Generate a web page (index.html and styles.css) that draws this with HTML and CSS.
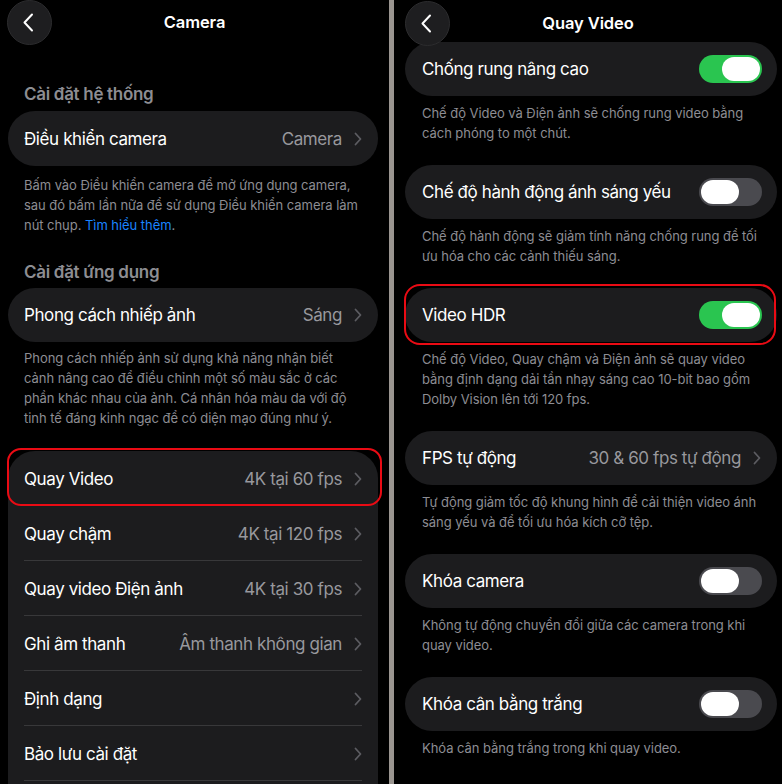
FILE: index.html
```html
<!DOCTYPE html>
<html lang="vi">
<head>
<meta charset="utf-8">
<title>Camera</title>
<link rel="stylesheet" href="styles.css">
</head>
<body>
<div class="screen">
  <section class="panel panel-left">
    <header class="nav">
      <div class="back"><svg width="12" height="19" viewBox="0 0 12 19"><path d="M10 1.5L2.5 9.5L10 17.5" fill="none" stroke="#fff" stroke-width="2" stroke-linecap="round" stroke-linejoin="round"/></svg></div>
      <div class="nav-title">Camera</div>
    </header>
    <div class="content content-left">
      <div class="sec-head">Cài đặt hệ thống</div>
      <div class="card">
        <div class="row"><span class="label">Điều khiển camera</span><span class="value">Camera</span><svg class="chev" width="8" height="14" viewBox="0 0 8 14"><path d="M1.5 1.5L6.5 7L1.5 12.5" fill="none" stroke="#5c5c61" stroke-width="1.8" stroke-linecap="round" stroke-linejoin="round"/></svg></div>
      </div>
      <p class="foot foot-1">Bấm vào Điều khiển camera để mở ứng dụng camera, sau đó bấm lần nữa để sử dụng Điều khiển camera làm nút chụp. <span class="link">Tìm hiểu thêm</span>.</p>
      <div class="sec-head sec-head-2">Cài đặt ứng dụng</div>
      <div class="card">
        <div class="row row-54"><span class="label">Phong cách nhiếp ảnh</span><span class="value">Sáng</span><svg class="chev" width="8" height="14" viewBox="0 0 8 14"><path d="M1.5 1.5L6.5 7L1.5 12.5" fill="none" stroke="#5c5c61" stroke-width="1.8" stroke-linecap="round" stroke-linejoin="round"/></svg></div>
      </div>
      <p class="foot foot-2">Phong cách nhiếp ảnh sử dụng khả năng nhận biết cảnh nâng cao để điều chỉnh một số màu sắc ở các phần khác nhau của ảnh. Cá nhân hóa màu da với độ tinh tế đáng kinh ngạc để có diện mạo đúng như ý.</p>
      <div class="card group">
        <div class="highlight hl-left"></div>
        <div class="row sep"><span class="label">Quay Video</span><span class="value">4K tại 60 fps</span><svg class="chev" width="8" height="14" viewBox="0 0 8 14"><path d="M1.5 1.5L6.5 7L1.5 12.5" fill="none" stroke="#5c5c61" stroke-width="1.8" stroke-linecap="round" stroke-linejoin="round"/></svg></div>
        <div class="row sep"><span class="label">Quay chậm</span><span class="value">4K tại 120 fps</span><svg class="chev" width="8" height="14" viewBox="0 0 8 14"><path d="M1.5 1.5L6.5 7L1.5 12.5" fill="none" stroke="#5c5c61" stroke-width="1.8" stroke-linecap="round" stroke-linejoin="round"/></svg></div>
        <div class="row sep"><span class="label">Quay video Điện ảnh</span><span class="value">4K tại 30 fps</span><svg class="chev" width="8" height="14" viewBox="0 0 8 14"><path d="M1.5 1.5L6.5 7L1.5 12.5" fill="none" stroke="#5c5c61" stroke-width="1.8" stroke-linecap="round" stroke-linejoin="round"/></svg></div>
        <div class="row sep"><span class="label">Ghi âm thanh</span><span class="value">Âm thanh không gian</span><svg class="chev" width="8" height="14" viewBox="0 0 8 14"><path d="M1.5 1.5L6.5 7L1.5 12.5" fill="none" stroke="#5c5c61" stroke-width="1.8" stroke-linecap="round" stroke-linejoin="round"/></svg></div>
        <div class="row sep"><span class="label">Định dạng</span><span class="value"></span><svg class="chev" width="8" height="14" viewBox="0 0 8 14"><path d="M1.5 1.5L6.5 7L1.5 12.5" fill="none" stroke="#5c5c61" stroke-width="1.8" stroke-linecap="round" stroke-linejoin="round"/></svg></div>
        <div class="row sep"><span class="label">Bảo lưu cài đặt</span><span class="value"></span><svg class="chev" width="8" height="14" viewBox="0 0 8 14"><path d="M1.5 1.5L6.5 7L1.5 12.5" fill="none" stroke="#5c5c61" stroke-width="1.8" stroke-linecap="round" stroke-linejoin="round"/></svg></div>
        <div class="row-spacer"></div>
      </div>
    </div>
  </section>

  <div class="divider"></div>

  <section class="panel panel-right">
    <header class="nav nav-right">
      <div class="back"><svg width="12" height="19" viewBox="0 0 12 19"><path d="M10 1.5L2.5 9.5L10 17.5" fill="none" stroke="#fff" stroke-width="2" stroke-linecap="round" stroke-linejoin="round"/></svg></div>
      <div class="nav-title">Quay Video</div>
    </header>
    <div class="content content-right">
      <div class="card">
        <div class="row row-r"><span class="label">Chống rung nâng cao</span><span class="toggle on"><span class="knob"></span></span></div>
      </div>
      <p class="foot foot-r">Chế độ Video và Điện ảnh sẽ chống rung video bằng cách phóng to một chút.</p>
      <div class="card">
        <div class="row row-r"><span class="label">Chế độ hành động ánh sáng yếu</span><span class="toggle"><span class="knob"></span></span></div>
      </div>
      <p class="foot foot-r">Chế độ hành động sẽ giảm tính năng chống rung để tối ưu hóa cho các cảnh thiếu sáng.</p>
      <div class="card">
        <div class="highlight hl-right"></div>
        <div class="row row-r"><span class="label">Video HDR</span><span class="toggle on"><span class="knob"></span></span></div>
      </div>
      <p class="foot foot-r">Chế độ Video, Quay chậm và Điện ảnh sẽ quay video bằng định dạng dải tần nhạy sáng cao 10-bit bao gồm Dolby Vision lên tới 120 fps.</p>
      <div class="card">
        <div class="row row-r"><span class="label">FPS tự động</span><span class="value">30 &amp; 60 fps tự động</span><svg class="chev" width="8" height="14" viewBox="0 0 8 14"><path d="M1.5 1.5L6.5 7L1.5 12.5" fill="none" stroke="#5c5c61" stroke-width="1.8" stroke-linecap="round" stroke-linejoin="round"/></svg></div>
      </div>
      <p class="foot foot-r">Tự động giảm tốc độ khung hình để cải thiện video ánh sáng yếu và để tối ưu hóa kích cỡ tệp.</p>
      <div class="card">
        <div class="row row-r"><span class="label">Khóa camera</span><span class="toggle"><span class="knob"></span></span></div>
      </div>
      <p class="foot foot-r">Không tự động chuyển đổi giữa các camera trong khi quay video.</p>
      <div class="card">
        <div class="row row-r"><span class="label">Khóa cân bằng trắng</span><span class="toggle"><span class="knob"></span></span></div>
      </div>
      <p class="foot foot-r">Khóa cân bằng trắng trong khi quay video.</p>
    </div>
  </section>
</div>
</body>
</html>
```

FILE: styles.css
```css
* { box-sizing: border-box; }
html, body { margin: 0; padding: 0; background: #000; }
body {
  font-family: Inter, "Noto Sans", "Liberation Sans", sans-serif;
  color: #fff;
  -webkit-font-smoothing: antialiased;
}
.screen {
  display: flex;
  width: 782px;
  height: 784px;
  overflow: hidden;
}
.panel {
  position: relative;
  height: 784px;
  overflow: hidden;
  background: #000;
}
.panel-left { width: 389px; }
.panel-right { flex: 1; }
.divider { width: 5px; background: #9a9590; }

.nav {
  position: absolute;
  top: 0; left: 0; right: 0;
  height: 44px;
  display: flex;
  align-items: center;
  justify-content: center;
  z-index: 2;
}
.back {
  position: absolute;
  left: 7px;
  top: 0;
  width: 45px;
  height: 45px;
  border-radius: 50%;
  background: #1e1e20;
  border: 1px solid #2c2c2e;
  display: flex;
  align-items: center;
  justify-content: center;
  padding-right: 3px;
}
.nav-right .back { left: 11px; top: 1px; }
.nav-title {
  font-size: 16.5px;
  font-weight: 600;
  letter-spacing: -0.1px;
}
.nav-right .nav-title { margin-top: 2px; }

.content { display: flex; flex-direction: column; }
.content-left { padding: 83px 11px 0 8px; }
.content-right { padding: 42px 5px 0 11px; }

.sec-head {
  font-size: 17px;
  font-weight: 600;
  color: #8d8d92;
  line-height: 22px;
  padding-left: 16px;
  margin-bottom: 6px;
  letter-spacing: -0.3px;
}
.sec-head-2 { margin-top: 26px; margin-bottom: 5px; }

.card {
  position: relative;
  background: #1c1c1e;
  border-radius: 27px;
}
.group { border-radius: 27px 27px 0 0; margin-top: 23px; }

.row {
  position: relative;
  display: flex;
  align-items: center;
  height: 55px;
  padding: 0 16px;
  font-size: 17px;
  letter-spacing: -0.4px;
}
.row-54 { height: 54px; }
.row-r { height: 54px; padding: 0 16px 0 17px; }
.row.sep::after {
  content: "";
  position: absolute;
  left: 16px; right: 16px; bottom: 0;
  height: 1px;
  background: #38383a;
}
.row-spacer { height: 30px; }
.label { flex: 1; white-space: nowrap; color: #fff; }
.value { color: #98989d; white-space: nowrap; margin-right: 12px; }
.chev { flex: none; }

.foot {
  margin: 0;
  padding: 0 16px;
  font-size: 13px;
  line-height: 20px;
  color: #8d8d93;
  letter-spacing: -0.05px;
}
.foot-1 { margin-top: 9px; }
.foot-2 { margin-top: 6px; }
.foot-r { margin: 7px 0 22px 0; padding: 0 16px 0 17px; }
.link { color: #1a84ff; }

.toggle {
  flex: none;
  position: relative;
  width: 63px;
  height: 28px;
  border-radius: 14px;
  background: #4a4a4f;
  display: flex;
  align-items: center;
  padding: 0 2px;
  margin-right: -1px;
}
.toggle.on { background: #2ac550; justify-content: flex-end; }
.knob {
  width: 38px;
  height: 24px;
  border-radius: 12px;
  background: #fff;
}

.highlight {
  position: absolute;
  border: 2.5px solid #ea0b14;
  border-radius: 14px;
  pointer-events: none;
  z-index: 1;
}
.hl-left { left: -1px; right: -4px; top: -3px; height: 58px; }
.hl-right { left: -1px; right: 1px; top: -4px; bottom: -3px; border-radius: 16px; }
```
